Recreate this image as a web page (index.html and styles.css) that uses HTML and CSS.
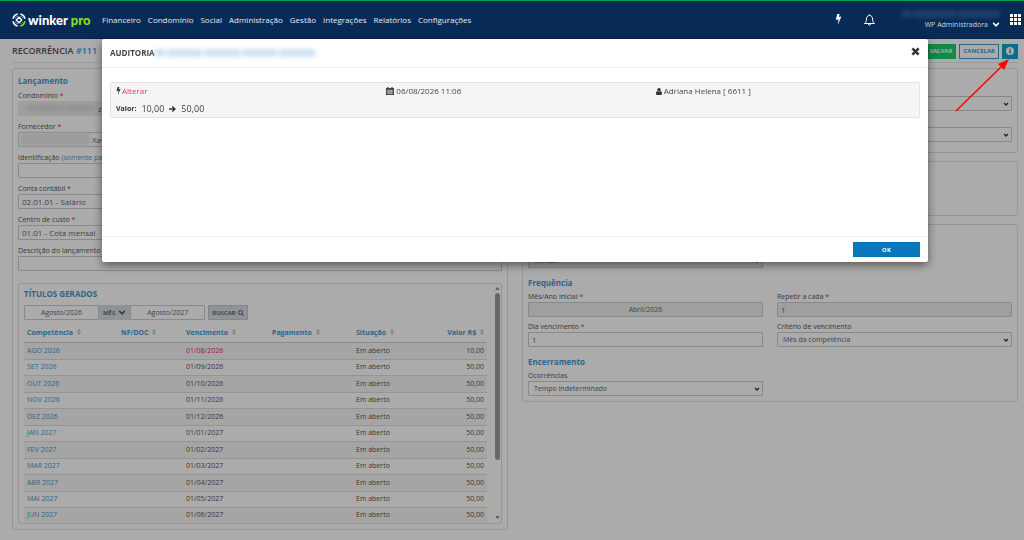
FILE: index.html
```html
<!DOCTYPE html>
<html lang="pt-BR">
<head>
    <meta charset="UTF-8">
    <meta name="viewport" content="width=device-width, initial-scale=1.0">
    <title>Winker Pro - Recorrência #111</title>
    <link rel="stylesheet" href="styles.css">
</head>
<body>
    <!-- Ícones reutilizados -->
    <svg class="sprite" aria-hidden="true">
        <symbol id="i-bolt" viewBox="0 0 10 16"><path d="M3.200 0h3.600L5.400 4.400 9.200 3.600 3.900 16 5 7.600 1 8.600z"/></symbol>
        <symbol id="i-sort" viewBox="0 0 8 12"><path d="M4 0l4 5H0zM4 12l4-5H0z"/></symbol>
        <symbol id="i-chevron" viewBox="0 0 12 8"><path d="M1.500 1.500L6 6l4.500-4.500" fill="none" stroke="currentColor" stroke-width="2.600"/></symbol>
    </svg>

    <header class="topbar">
        <a href="#" class="logo">
            <svg viewBox="0 0 28 28" fill="none" stroke="#fff" stroke-width="3">
                <path d="M11.500 2A12.300 12.300 0 0 0 2 11.500M2 16.500A12.300 12.300 0 0 0 11.500 26M16.500 2A12.300 12.300 0 0 1 26 11.500"/>
                <path d="M26 16.500A12.300 12.300 0 0 1 16.500 26" stroke="#7ee01d"/>
                <path d="M14 8.500l5.500 5.500-5.500 5.500L8.500 14z" stroke-width="2.600"/>
                <path d="M8.500 5.500l2 2M5.500 8.500l2 2M19.500 5.500l-2 2M22.500 8.500l-2 2M5.500 19.500l2-2M8.500 22.500l2-2" stroke-width="2"/>
                <path d="M22.500 19.500l-2-2M19.500 22.500l-2-2" stroke="#7ee01d" stroke-width="2"/>
            </svg>
            <span class="logo-nome">winker <b>pro</b></span>
        </a>
        <nav class="menu">
            <a href="#">Financeiro</a>
            <a href="#">Condomínio</a>
            <a href="#">Social</a>
            <a href="#">Administração</a>
            <a href="#">Gestão</a>
            <a href="#">Integrações</a>
            <a href="#">Relatórios</a>
            <a href="#">Configurações</a>
        </nav>
        <div class="topbar-acoes">
            <button type="button" class="icone" aria-label="Atalhos"><svg class="bolt"><use href="#i-bolt"/></svg></button>
            <button type="button" class="icone" aria-label="Notificações">
                <svg class="sino" viewBox="0 0 22 24" fill="none" stroke="#fff" stroke-width="2" stroke-linejoin="round">
                    <path d="M11 1v2M11 3c-4 0-6 3-6 7 0 5-1.500 6.500-4 9h20c-2.500-2.500-4-4-4-9 0-4-2-7-6-7zM8.500 19.500c0 3.500 5 3.500 5 0"/>
                </svg>
            </button>
            <div class="conta">
                <span class="oculto oculto-conta" aria-hidden="true"><i></i><i></i><i></i></span>
                <a href="#">WP Administradora <svg class="seta"><use href="#i-chevron"/></svg></a>
            </div>
            <button type="button" class="icone" aria-label="Aplicativos">
                <svg class="grade" viewBox="0 0 11 11" fill="#fff"><path d="M0 0h3v3H0zM4 0h3v3H4zM8 0h3v3H8zM0 4h3v3H0zM4 4h3v3H4zM8 4h3v3H8zM0 8h3v3H0zM4 8h3v3H4zM8 8h3v3H8z"/></svg>
            </button>
        </div>
    </header>

    <main class="pagina">
        <div class="titulo">
            <h1>RECORRÊNCIA <span>#111</span></h1>
            <div class="botoes">
                <button type="button" class="btn btn-salvar">SALVAR</button>
                <button type="button" class="btn btn-cancelar">CANCELAR</button>
                <button type="button" class="btn btn-info" aria-label="Auditoria">
                    <svg viewBox="0 0 16 16"><circle cx="8" cy="8" r="8" fill="currentColor"/><path d="M6 6.500h3.200V11h1v1.500H6V11h1V8H6zM6.900 3h2.300v2.200H6.900z" fill="#078fb8"/></svg>
                </button>
            </div>
        </div>

        <div class="colunas">
            <section class="painel painel-lancamento">
                <h2>Lançamento</h2>
                <div class="campo">
                    <label for="condominio">Condomínio <em>*</em></label>
                    <div class="campo-oculto">
                        <input type="text" id="condominio" class="valor-condominio" value="z" disabled>
                        <span class="oculto oculto-campo" aria-hidden="true"><i></i><i></i><i></i></span>
                    </div>
                </div>
                <div class="campo">
                    <label for="fornecedor">Fornecedor <em>*</em></label>
                    <div class="campo-oculto">
                        <input type="text" id="fornecedor" class="valor-fornecedor" value="Xavier">
                        <span class="oculto oculto-campo oculto-fundo" aria-hidden="true"><i></i><i></i></span>
                    </div>
                </div>
                <div class="campo">
                    <label for="identificacao">Identificação <span>(somente para consulta)</span></label>
                    <input type="text" id="identificacao">
                </div>
                <div class="campo">
                    <label for="contabil">Conta contábil <em>*</em></label>
                    <input type="text" id="contabil" value="02.01.01 - Salário">
                </div>
                <div class="campo">
                    <label for="custo">Centro de custo <em>*</em></label>
                    <input type="text" id="custo" value="01.01 - Cota mensal">
                </div>
                <div class="campo">
                    <label for="descricao">Descrição do lançamento <em>(*)</em></label>
                    <input type="text" id="descricao">
                </div>

                <div class="titulos">
                    <div class="titulos-conteudo">
                        <h2>TÍTULOS GERADOS</h2>
                        <div class="filtro">
                            <input type="text" value="Agosto/2026" aria-label="Competência inicial">
                            <button type="button" class="btn-cinza">MÊS <svg class="seta"><use href="#i-chevron"/></svg></button>
                            <input type="text" value="Agosto/2027" aria-label="Competência final">
                            <button type="button" class="btn-cinza btn-buscar">BUSCAR
                                <svg class="lupa" viewBox="0 0 12 12" fill="none" stroke="currentColor" stroke-width="2"><circle cx="5" cy="5" r="4"/><path d="M8 8l3.500 3.500"/></svg>
                            </button>
                        </div>
                        <table>
                            <colgroup><col class="c-comp"><col class="c-nf"><col class="c-venc"><col class="c-pag"><col class="c-sit"><col></colgroup>
                            <thead>
                                <tr>
                                    <th>Competência <svg><use href="#i-sort"/></svg></th>
                                    <th>NF/DOC <svg><use href="#i-sort"/></svg></th>
                                    <th>Vencimento <svg><use href="#i-sort"/></svg></th>
                                    <th>Pagamento <svg><use href="#i-sort"/></svg></th>
                                    <th>Situação <svg><use href="#i-sort"/></svg></th>
                                    <th>Valor R$ <svg><use href="#i-sort"/></svg></th>
                                </tr>
                            </thead>
                            <tbody>
                                <tr><td><a href="#">AGO 2026</a></td><td></td><td class="vencido">01/08/2026</td><td></td><td>Em aberto</td><td>10,00</td></tr>
                                <tr><td><a href="#">SET 2026</a></td><td></td><td>01/09/2026</td><td></td><td>Em aberto</td><td>50,00</td></tr>
                                <tr><td><a href="#">OUT 2026</a></td><td></td><td>01/10/2026</td><td></td><td>Em aberto</td><td>50,00</td></tr>
                                <tr><td><a href="#">NOV 2026</a></td><td></td><td>01/11/2026</td><td></td><td>Em aberto</td><td>50,00</td></tr>
                                <tr><td><a href="#">DEZ 2026</a></td><td></td><td>01/12/2026</td><td></td><td>Em aberto</td><td>50,00</td></tr>
                                <tr><td><a href="#">JAN 2027</a></td><td></td><td>01/01/2027</td><td></td><td>Em aberto</td><td>50,00</td></tr>
                                <tr><td><a href="#">FEV 2027</a></td><td></td><td>01/02/2027</td><td></td><td>Em aberto</td><td>50,00</td></tr>
                                <tr><td><a href="#">MAR 2027</a></td><td></td><td>01/03/2027</td><td></td><td>Em aberto</td><td>50,00</td></tr>
                                <tr><td><a href="#">ABR 2027</a></td><td></td><td>01/04/2027</td><td></td><td>Em aberto</td><td>50,00</td></tr>
                                <tr><td><a href="#">MAI 2027</a></td><td></td><td>01/05/2027</td><td></td><td>Em aberto</td><td>50,00</td></tr>
                                <tr><td><a href="#">JUN 2027</a></td><td></td><td>01/06/2027</td><td></td><td>Em aberto</td><td>50,00</td></tr>
                            </tbody>
                        </table>
                    </div>
                    <div class="rolagem" aria-hidden="true">
                        <svg viewBox="0 0 6 4"><path d="M3 0l3 4H0z"/></svg>
                        <div class="trilho"><div class="polegar"></div></div>
                        <svg viewBox="0 0 6 4"><path d="M0 0h6L3 4z"/></svg>
                    </div>
                </div>
            </section>

            <div class="coluna">
                <section class="painel painel-opcoes">
                    <select aria-label="Forma de pagamento"><option></option></select>
                    <select aria-label="Conta bancária"><option></option></select>
                </section>
                <section class="painel painel-vazio"></section>
                <section class="painel painel-recorrencia">
                    <div class="campos">
                        <div class="campo">
                            <select aria-label="Periodicidade" disabled><option>Mensal</option></select>
                        </div>
                    </div>
                    <h2>Frequência</h2>
                    <div class="campos">
                        <div class="campo">
                            <label for="inicial">Mês/Ano inicial <em>*</em></label>
                            <input type="text" id="inicial" class="centro" value="Abril/2026" disabled>
                        </div>
                        <div class="campo">
                            <label for="repetir">Repetir a cada <em>*</em></label>
                            <input type="text" id="repetir" value="1" disabled>
                        </div>
                        <div class="campo">
                            <label for="dia">Dia vencimento <em>*</em></label>
                            <input type="text" id="dia" value="1">
                        </div>
                        <div class="campo">
                            <label for="criterio">Critério de vencimento</label>
                            <select id="criterio"><option>Mês da competência</option></select>
                        </div>
                    </div>
                    <h2>Encerramento</h2>
                    <div class="campos">
                        <div class="campo">
                            <label for="ocorrencias">Ocorrências</label>
                            <select id="ocorrencias"><option>Tempo indeterminado</option></select>
                        </div>
                    </div>
                </section>
            </div>
        </div>
    </main>

    <!-- Modal de auditoria -->
    <div class="fundo-modal">
        <div class="modal" role="dialog" aria-modal="true" aria-labelledby="modal-titulo">
            <div class="modal-topo">
                <h2 id="modal-titulo">AUDITORIA</h2>
                <span class="oculto oculto-titulo" aria-hidden="true"><i></i><i></i><i></i><i></i><i></i></span>
                <button type="button" class="fechar" aria-label="Fechar">
                    <svg viewBox="0 0 10 10"><path d="M1.500 1.500l7 7M8.500 1.500l-7 7" stroke="currentColor" stroke-width="2.800"/></svg>
                </button>
            </div>
            <div class="modal-corpo">
                <div class="registro">
                    <div class="registro-linha">
                        <span class="acao"><svg class="bolt"><use href="#i-bolt"/></svg> <b>Alterar</b></span>
                        <span>
                            <svg class="calendario" viewBox="0 0 14 14"><path d="M0 2h14v12H0z"/><path d="M3.500 0v3.500M10.500 0v3.500" stroke="currentColor" stroke-width="2"/><path d="M1 5.500h12M1 8.300h12M1 11h12M4 5v8M7 5v8M10 5v8" stroke="#f5f5f5" stroke-width=".9"/></svg>
                            06/08/2026 11:06
                        </span>
                        <span>
                            <svg class="pessoa" viewBox="0 0 12 14"><circle cx="6" cy="3.500" r="3.500"/><path d="M2.500 6C1 6.500 0 9 0 11.500 0 13 1 14 2.200 14h7.600c1.200 0 2.200-1 2.200-2.500C12 9 11 6.500 9.500 6c-1.500 2-5.500 2-7 0z"/></svg>
                            Adriana Helena [ 6611 ]
                        </span>
                    </div>
                    <div class="registro-valor">
                        <strong>Valor:</strong>
                        <span>10,00</span>
                        <svg viewBox="0 0 14 12"><path d="M0 6h11M6.500 1L12 6l-5.500 5" fill="none" stroke="currentColor" stroke-width="2.800"/></svg>
                        <span>50,00</span>
                    </div>
                </div>
            </div>
            <div class="modal-rodape">
                <button type="button" class="btn-ok">OK</button>
            </div>
        </div>
    </div>

    <svg class="seta-vermelha" viewBox="0 0 56 54" aria-hidden="true">
        <path d="M1 53L46 9" stroke="#f00" stroke-width="1.500"/>
        <path d="M54 1L49 12 43 6z" fill="#f00"/>
    </svg>
</body>
</html>
```

FILE: styles.css
```css
* { box-sizing: border-box; }

body {
    margin: 0;
    min-height: 100vh;
    font-family: "Open Sans", "Noto Sans", sans-serif;
    font-size: 7px;
    line-height: 10px;
    color: #555;
    background: #fff;
    overflow-x: hidden;
}

a { color: inherit; text-decoration: none; }
button, input, select { font-family: inherit; margin: 0; }
button { cursor: pointer; padding: 0; border: 0; }
h1, h2 { margin: 0; }
svg { flex: none; }
svg:not([fill]) { fill: currentColor; }
.sprite { display: none; }

/* Barra superior */
.topbar {
    position: relative;
    z-index: 5;
    display: flex;
    align-items: center;
    height: 39px;
    padding: 0 3px 0 12px;
    background: #082a57;
    border-top: 1px solid #00a651;
    border-bottom: 1px solid #082048;
    color: #fff;
}

.logo {
    display: flex;
    align-items: center;
    gap: 2px;
    width: 90px;
}

.logo svg { width: 14px; height: 14px; }
.logo-nome { font-family: Lato, sans-serif; font-size: 13px; font-weight: 900; white-space: nowrap; line-height: 16px; }
.logo-nome b { color: #7ee01d; font-weight: 900; }

.menu { display: flex; gap: 7px; font-size: 8px; color: #e6eaf0; }

.topbar-acoes { display: flex; align-items: center; margin-left: auto; }
.icone { display: flex; background: none; color: #fff; }
.topbar .bolt { width: 7px; height: 11px; margin-right: 22px; }
.sino { width: 11px; height: 12px; margin-right: 27px; }
.grade { width: 11px; height: 11px; }

.conta {
    display: flex;
    flex-direction: column;
    align-items: flex-end;
    gap: 2px;
    margin-right: 10px;
    color: #ccd4df;
}

.conta a { display: flex; align-items: center; gap: 4px; }
.seta { width: 8px; height: 5px; }
.conta .seta { color: #fff; }

/* Dados ocultados */
.oculto { display: flex; gap: 2px; filter: blur(2px); }
.oculto i { flex: 1; background: currentColor; }
.oculto i:first-child { flex: 0 0 10px; }
.oculto-conta { width: 98px; height: 8px; color: #203f6b; }
.oculto-titulo { width: 160px; height: 8px; color: #cfe3f1; }
.oculto-campo { position: absolute; left: 8px; top: 4px; width: 68px; height: 7px; color: #dadada; }

/* Página */
.pagina { padding: 1px 6px 10px 12px; }

.titulo {
    display: flex;
    justify-content: space-between;
    align-items: center;
    height: 23px;
    border-bottom: 1px solid #e9e9e9;
}

h1 { font-size: 9px; font-weight: 600; color: #555; }
h1 span { color: #4598d0; }

.botoes { display: flex; gap: 3px; }

.btn {
    height: 15px;
    padding: 0 3px;
    border: 1px solid #18ce6b;
    font-size: 6px;
    font-weight: 700;
    color: #fff;
}

.btn-salvar { background: #18ce6b; }
.btn-cancelar { background: #fff; border-color: #3b98d0; color: #3b98d0; }
.btn-info { display: flex; align-items: center; background: #07a5d2; border-color: #07a5d2; }
.btn-info svg { width: 8px; height: 8px; }

.colunas {
    display: grid;
    grid-template-columns: 1fr 1fr;
    gap: 14px;
    align-items: start;
    padding-top: 5px;
}

.coluna { display: flex; flex-direction: column; gap: 8px; }

.painel {
    padding: 4px 5px 5px;
    border: 1px solid #e0e0e0;
    border-radius: 3px;
}

.painel h2 {
    margin-bottom: 3px;
    font-size: 8px;
    line-height: 14px;
    color: #4598d0;
}

.campo { display: flex; flex-direction: column; margin-bottom: 5px; }
.painel-lancamento { padding-top: 5px; }
.painel-lancamento > .campo { margin-bottom: 6px; }
label em { color: #f0255a; font-style: normal; }
label span { color: #4598d0; }

input, select {
    width: 100%;
    height: 15px;
    padding: 0 3px;
    border: 1px solid #ccc;
    border-radius: 1px;
    background: #fff;
    font-size: 8px;
    color: #666;
}

select {
    appearance: none;
    padding: 0 5px;
    font-size: 7px;
    background: #fff url("data:image/svg+xml,%3Csvg xmlns='http://www.w3.org/2000/svg' viewBox='0 0 12 8'%3E%3Cpath d='M2 2l4 4 4-4' fill='none' stroke='%23333' stroke-width='2.500'/%3E%3C/svg%3E") no-repeat right 2px center / 6px 4px;
}

input:disabled, select:disabled { background-color: #eee; color: #666; opacity: 1; }
.centro { text-align: center; font-size: 7px; }

.campo-oculto { position: relative; }
.valor-condominio { padding-left: 79px; border-color: #eee; }
.valor-fornecedor { padding-left: 73px; }
.oculto-fundo { left: 2px; top: 1px; width: 70px; height: 13px; gap: 0; color: #e8e8e8; }

/* Títulos gerados */
.titulos {
    display: flex;
    margin-top: 12px;
    border: 1px solid #e0e0e0;
    border-radius: 3px;
}

.titulos-conteudo { flex: 1; padding: 3px 6px 0 5px; }
.titulos h2 { margin-bottom: 4px; }

.filtro { display: flex; margin-bottom: 4px; }
.filtro input { width: 75px; text-align: center; font-size: 7px; }

.btn-cinza {
    display: flex;
    align-items: center;
    gap: 3px;
    height: 15px;
    padding: 0 4px;
    background: #d4dbe3;
    font-size: 6px;
    font-weight: 600;
    color: #555;
}

.btn-buscar { gap: 2px; margin-left: 3px; border: 1px solid #c3c9d1; padding: 0 3px; }
.lupa { width: 6px; height: 6px; }

table { width: 100%; table-layout: fixed; border-collapse: collapse; }
th, td { padding: 0 3px; text-align: left; }
th { height: 18px; color: #4598d0; border-bottom: 1px solid #d0d0d0; white-space: nowrap; }
th svg { width: 4px; height: 6px; margin-left: 2px; color: #bbb; }
td { height: 17px; border-bottom: 1px solid #ddd; }
tr:nth-child(even) td { height: 16px; }
tbody tr:nth-child(odd) { background: #f7f7f7; }
tbody tr:last-child td { height: 16px; border-bottom: 0; }
th:last-child, td:last-child { text-align: right; }
td a { color: #4598d0; }
.vencido { color: #f0255a; }
.c-comp { width: 94px; }
.c-nf { width: 65px; }
.c-venc { width: 86px; }
.c-pag { width: 84px; }
.c-sit { width: 70px; }

.rolagem {
    display: flex;
    flex-direction: column;
    align-items: center;
    gap: 3px;
    width: 8px;
    padding: 3px 0 4px;
    color: #888;
}

.rolagem svg { width: 5px; height: 3px; }
.trilho { flex: 1; width: 5px; }
.polegar { height: 76%; border-radius: 3px; background: #9b9b9b; }

/* Coluna direita */
.painel-opcoes { display: flex; flex-direction: column; gap: 16px; padding: 27px 5px 10px; }
.painel-vazio { min-height: 55px; }
.painel-recorrencia { padding-top: 28px; padding-bottom: 0; }
.painel-recorrencia h2 { margin: 3px 0 2px; }
.campos { display: grid; grid-template-columns: 1fr 1fr; column-gap: 14px; }

/* Modal */
.fundo-modal {
    position: fixed;
    inset: 39px 0 0;
    z-index: 10;
    display: flex;
    align-items: flex-start;
    padding: 0 96px 0 102px;
    background: rgba(0, 0, 0, 0.33);
}

.modal {
    flex: 1;
    background: #fff;
    border-radius: 2px;
    box-shadow: 0 3px 10px rgba(0, 0, 0, 0.5);
}

.modal-topo {
    display: flex;
    align-items: center;
    height: 29px;
    padding: 0 8px;
    border-bottom: 1px solid #eee;
}

.modal-topo h2 { font-size: 8px; color: #444; }
.fechar { display: flex; margin-left: auto; margin-bottom: 4px; background: none; color: #333; }
.fechar svg { width: 9px; height: 9px; }

.modal-corpo { min-height: 168px; padding: 14px 8px; font-size: 8px; }

.registro {
    border: 1px solid #e3e3e3;
    border-radius: 2px;
    background: #f5f5f5;
    color: #444;
}

.registro-linha { display: grid; grid-template-columns: repeat(3, 1fr); padding-top: 2px; line-height: 12px; }
.registro-linha > span { display: flex; align-items: center; gap: 2px; padding-left: 6px; }
.registro svg { color: #333; }
.registro .bolt { width: 5px; height: 8px; }
.registro .acao { gap: 1px; padding-left: 5px; }
.acao b { font-weight: 400; color: #ee2f5b; }
.calendario { width: 8px; height: 8px; }
.pessoa { width: 6px; height: 7px; }

.registro-valor {
    display: flex;
    align-items: center;
    gap: 5px;
    padding: 6px 5px 2px;
    font-size: 9px;
    line-height: 12px;
}

.registro-valor strong { font-size: 7px; color: #333; }
.registro-valor svg { width: 7px; height: 6px; }

.modal-rodape {
    display: flex;
    justify-content: flex-end;
    padding: 5px 8px;
    border-top: 1px solid #eee;
}

.btn-ok {
    width: 67px;
    height: 15px;
    background: #0877bb;
    font-size: 6px;
    font-weight: 700;
    color: #fff;
}

/* Seta de destaque sobre o botão de auditoria */
.seta-vermelha {
    position: absolute;
    top: 58px;
    right: 13px;
    z-index: 20;
    width: 56px;
    height: 54px;
}
```
